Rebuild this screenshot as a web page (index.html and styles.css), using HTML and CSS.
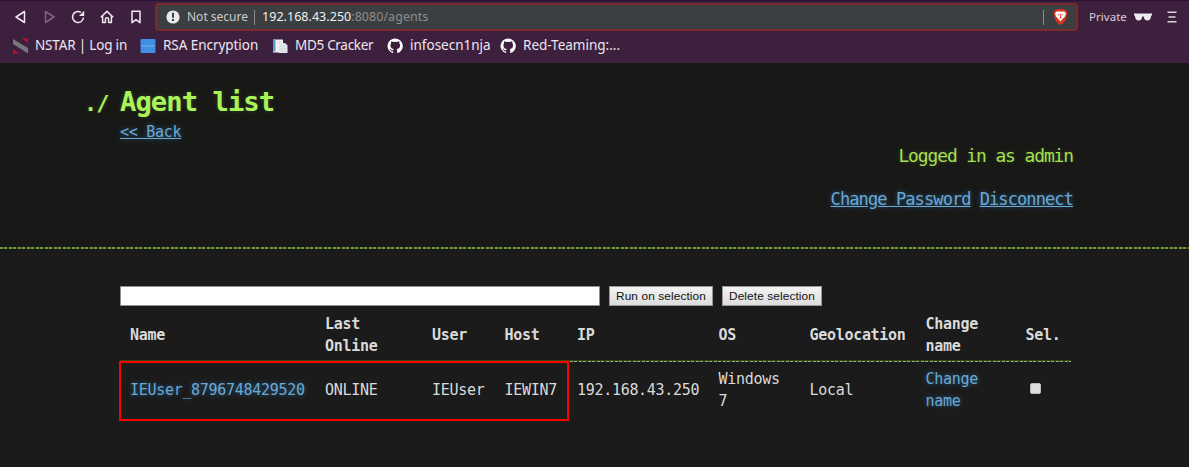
FILE: index.html
```html
<!DOCTYPE html>
<html lang="en">
<head>
<meta charset="utf-8">
<title>Agent list</title>
<link rel="stylesheet" href="styles.css">
</head>
<body>
<div class="chrome">
  <div class="toolbar">
    <div class="nav">
      <svg class="ico" viewBox="0 0 16 16"><path d="M12.500 2.500v11L4 8z"/></svg>
      <svg class="ico dim" viewBox="0 0 16 16"><path d="M4.500 2.500v11L13 8z"/></svg>
      <svg class="ico" viewBox="0 0 16 16"><path d="M11 3.400A5.500 5.500 0 1 0 13.500 8.500"/><path class="solid" d="M9 7h5.200V1.800z"/></svg>
      <svg class="ico" viewBox="0 0 16 16"><path d="M1.8 8.3 8 2.4l6.2 5.9M3.6 7v6.6h2.8v-3.3a1.6 1.6 0 0 1 3.2 0v3.3h2.8V7"/></svg>
      <svg class="ico" viewBox="0 0 16 16"><path d="M4 2.3h8v11.4l-4-3-4 3z"/></svg>
    </div>
    <div class="address">
      <svg class="warn" viewBox="0 0 14 14"><circle cx="7" cy="7" r="6.6" fill="#e8e8e8"/><path d="M6 2.8h2v5H6zM6 9h2v2H6z" fill="#3b3f41"/></svg>
      <span class="secure">Not secure</span>
      <span class="sep"></span>
      <span class="url"><b>192.168.43.250</b><i>:8080/agents</i></span>
      <span class="sep end"></span>
      <svg class="shield" viewBox="0 0 14 16"><path d="M3.6 0h6.8l1.2 1.3h1.3l1.1 2.6-.7 2.3c-.5 3.8-1.6 6.8-6.3 9.8C2.3 13 1.200 10 .7 6.200L0 3.900l1.100-2.600h1.300z" fill="#d9331d"/><path d="M3 2.400h8l1.500 2-1 3-2.700 2.800L7 12.500l-1.800-2.300-2.700-2.800-1-3z" fill="#fff"/><path d="M3.800 4.800 6 5.400 5.500 6.500zM10.200 4.800 8 5.400l.5 1.100zM6.600 5h.8v3l.9.700L7 9.500l-1.300-.8.9-.7z" fill="#d9331d"/></svg>
    </div>
    <span class="private">Private</span>
    <svg class="shades" viewBox="0 0 18 8"><path d="M0 .5h18v1.700l-.9.500c-.2 2.800-1.300 4.800-3.700 4.800-2.300 0-3.200-1.600-3.700-4H8.300c-.5 2.400-1.400 4-3.700 4C2.200 7.500 1.100 5.500.9 2.700L0 2.200z" fill="#f0eaf0"/></svg>
    <svg class="menu" viewBox="0 0 10 12"><path d="M.5 1.200h9M1.500 6h7M.5 10.800h9" stroke="#ddd3dc" stroke-width="1.500"/></svg>
  </div>
  <div class="bookmarks">
    <div class="mark m1"><svg viewBox="0 0 16 16"><path d="M1 1 16 10v5.500L1 6z" fill="#77777b"/><path d="M10 .5h6v4.500zM1 15.500V11.500L7 15.500z" fill="#c01028"/></svg><span>NSTAR | Log in</span></div>
    <div class="mark m2"><svg viewBox="0 0 16 16"><rect x=".5" y="1" width="15" height="14" rx="1" fill="#3f8fe4"/><path d="M2 8h12" stroke="#88bdf3" stroke-dasharray="1.500 .5"/></svg><span>RSA Encryption</span></div>
    <div class="mark m3"><svg viewBox="0 0 16 16"><path d="M1 1.500h10v13H1z" fill="#f1f3f5"/><path d="M1 1.500h2.500v12H1z" fill="#5aa0ce"/><path d="M7 5h6l2.500 2.500V15H7z" fill="#e3e5e8"/><path d="M5 4h5M8 8h5M8 10.500h6M8 13h6" stroke="#d4d8dd"/></svg><span>MD5 Cracker</span></div>
    <div class="mark m4"><svg viewBox="0 0 16 16"><path fill="#fff" d="M8 .5a7.500 7.500 0 0 0-2.400 14.600c.4.100.5-.2.500-.4v-1.400c-2.100.5-2.500-1-2.500-1-.4-.9-.9-1.100-.9-1.100-.7-.5.1-.5.100-.5.8.100 1.200.8 1.200.8.700 1.200 1.900.8 2.300.6.100-.5.300-.8.500-1-1.700-.2-3.400-.9-3.400-3.800 0-.8.300-1.500.8-2-.1-.2-.4-1 .1-2 0 0 .6-.2 2.100.8a7 7 0 0 1 3.700 0c1.500-1 2.100-.8 2.100-.8.400 1 .2 1.800.1 2 .5.500.8 1.200.8 2 0 2.900-1.700 3.600-3.400 3.800.3.200.5.700.5 1.400v2.200c0 .2.100.5.500.4A7.500 7.500 0 0 0 8 .5z"/></svg><span>infosecn1nja</span></div>
    <div class="mark m5"><svg viewBox="0 0 16 16"><path fill="#fff" d="M8 .5a7.500 7.500 0 0 0-2.400 14.600c.4.100.5-.2.500-.4v-1.400c-2.100.5-2.500-1-2.500-1-.4-.9-.9-1.100-.9-1.100-.7-.5.1-.5.100-.5.8.100 1.200.8 1.200.8.700 1.200 1.900.8 2.300.6.100-.5.300-.8.500-1-1.700-.2-3.400-.9-3.400-3.800 0-.8.300-1.500.8-2-.1-.2-.4-1 .1-2 0 0 .6-.2 2.100.8a7 7 0 0 1 3.700 0c1.500-1 2.100-.8 2.100-.8.400 1 .2 1.800.1 2 .5.500.8 1.200.8 2 0 2.900-1.700 3.600-3.400 3.800.3.200.5.700.5 1.400v2.200c0 .2.100.5.500.4A7.500 7.500 0 0 0 8 .5z"/></svg><span>Red-Teaming:...</span></div>
  </div>
</div>
<header class="head">
  <h1><span class="prefix">./</span>Agent list</h1>
  <a class="back">&lt;&lt; Back</a>
  <div class="logged">Logged in as admin</div>
  <div class="account"><a>Change Password</a><a>Disconnect</a></div>
</header>
<main class="main">
  <div class="controls"><input type="text" class="cmd"><button class="run">Run on selection</button><button class="del">Delete selection</button></div>
  <div class="agents">
    <div class="row th"><span>Name</span><span>Last<br>Online</span><span>User</span><span>Host</span><span>IP</span><span>OS</span><span>Geolocation</span><span>Change<br>name</span><span>Sel.</span></div>
    <div class="rule"></div>
    <div class="row"><a>IEUser_8796748429520</a><span>ONLINE</span><span>IEUser</span><span>IEWIN7</span><span>192.168.43.250</span><span>Windows<br>7</span><span>Local</span><a>Change<br>name</a><span><i class="check"></i></span></div>
    <div class="highlight"></div>
  </div>
</main>
</body>
</html>
```
FILE: styles.css
```css
* { box-sizing: border-box; }
body { margin: 0; width: 1189px; height: 467px; overflow: hidden; background: #1b1b1b; color: #dadada; font: 15px/21.75px "DejaVu Sans Mono", monospace; letter-spacing: -.3px; display: flex; flex-direction: column; }
svg { display: block; flex: none; }

.chrome { height: 63px; flex: none; background: #3d203e; border-top: 1px solid #2b1136; color: #eee6ee; font-family: "Noto Sans", sans-serif; letter-spacing: 0; padding-top: 2px; }
.toolbar { height: 28px; display: flex; align-items: center; }
.nav { display: flex; gap: 13px; width: 155px; padding-left: 12px; flex: none; }
.ico { width: 16px; height: 16px; fill: none; stroke: #f0eaf0; stroke-width: 1.5; stroke-linejoin: round; }
.ico .solid { fill: #f0eaf0; stroke: none; }
.ico.dim { stroke: #80647f; }
.address { width: 923px; height: 28px; flex: none; background: #3b3f41; border: 2px solid #7a2b2b; border-radius: 4px; display: flex; align-items: center; padding-left: 9px; font-size: 12.5px; }
.warn { width: 14px; height: 14px; margin-right: 7px; }
.secure { width: 62px; color: #c9cbcc; font-size: 12px; white-space: nowrap; }
.sep { width: 1px; height: 15px; background: #8b8e90; margin-left: 5px; flex: none; }
.url { margin-left: 7px; white-space: nowrap; letter-spacing: .04px; }
.url b { font-weight: 400; color: #f0f0f0; }
.url i { font-style: normal; color: #8b8e90; }
.sep.end { margin-left: auto; margin-right: 9px; }
.shield { width: 15px; height: 16px; margin-right: 8px; }
.private { width: 45px; margin-left: 11px; font-size: 11.6px; color: #d8cdd8; }
.shades { width: 18px; height: 8px; }
.menu { width: 10px; height: 12px; margin-left: 15px; }
.bookmarks { height: 30px; display: flex; padding-left: 12px; font-size: 13.5px; }
.mark { display: flex; align-items: center; gap: 7px; white-space: nowrap; flex: none; }
.mark svg { width: 16px; height: 16px; }
.m1 { width: 128px; letter-spacing: -.18px; }
.m2 { width: 132px; letter-spacing: -.05px; }
.m3 { width: 115px; letter-spacing: -.3px; }
.m4 { width: 113px; }

.head { height: 187px; flex: none; position: relative; background: #181817; padding: 19px 116px 0 120px; display: flex; flex-direction: column; }
.head::after { content: ""; position: absolute; left: 0; right: 0; bottom: 1px; height: 2px; background: repeating-linear-gradient(90deg, #75973f 0 2.8px, #293719 2.8px 4.5px); }
h1 { margin: 0 0 0 -36px; height: 40px; font-size: 27.2px; line-height: 39px; letter-spacing: -0.95px; color: #a9f458; text-shadow: 0 0 4px rgba(181,232,83,.2); display: flex; align-items: baseline; }
.prefix { width: 36px; font-size: 21.75px; }
a { color: #69a9d4; text-shadow: 0 0 5px rgba(70,155,225,.55); }
.back { text-decoration: underline; height: 22px; width: 65px; white-space: nowrap; }
.logged { text-align: right; color: #a5e052; font-size: 17.9px; letter-spacing: -1.07px; line-height: 24px; text-shadow: 0 0 5px rgba(181,232,83,.2); }
.account { display: flex; justify-content: flex-end; gap: 9px; margin-top: 19px; font-size: 17px; line-height: 24px; letter-spacing: -.9px; }
.account a { text-decoration: underline; }

.main { padding: 36px 118px 0 120px; }
.controls { display: flex; height: 20px; }
.cmd { width: 480px; height: 20px; margin: 0 9px 0 0; padding: 0; border: 1px solid #8e8e8e; background: #fff; border-radius: 0; }
.controls button { font: 11.8px "Liberation Sans", Arial, sans-serif; letter-spacing: .13px; height: 20px; padding: 0; color: #111; border: 1px solid #999; background: linear-gradient(#f4f4f4, #dcdcdc); border-radius: 0; white-space: nowrap; }
.run { width: 104px; margin-right: 9px; }
.del { width: 100px; }
.agents { position: relative; padding-top: 5px; }
.row { display: grid; grid-template-columns: 195px 107px 72.500px 72.500px 141.500px 91px 116px 100px 55.500px; align-items: center; height: 49px; padding-top: 1px; }
.row > * { padding-left: 10px; white-space: nowrap; }
.row.th { font-weight: 700; }
.rule { height: 2px; background: linear-gradient(#32480f, #32480f) top / 100% 1px no-repeat, repeating-linear-gradient(90deg, #a2ad88 0 2.8px, #2c3c18 2.800px 4.500px); }
.rule + .row { height: 56px; padding-top: 1px; }
.check { display: block; width: 11px; height: 11px; margin: -4px 0 0 4px; border: 1px solid #bbb; border-radius: 2px; background: #dedede; }
.highlight { position: absolute; left: -1px; top: 55px; width: 450px; height: 60px; border: 2px solid #f00; }
```
